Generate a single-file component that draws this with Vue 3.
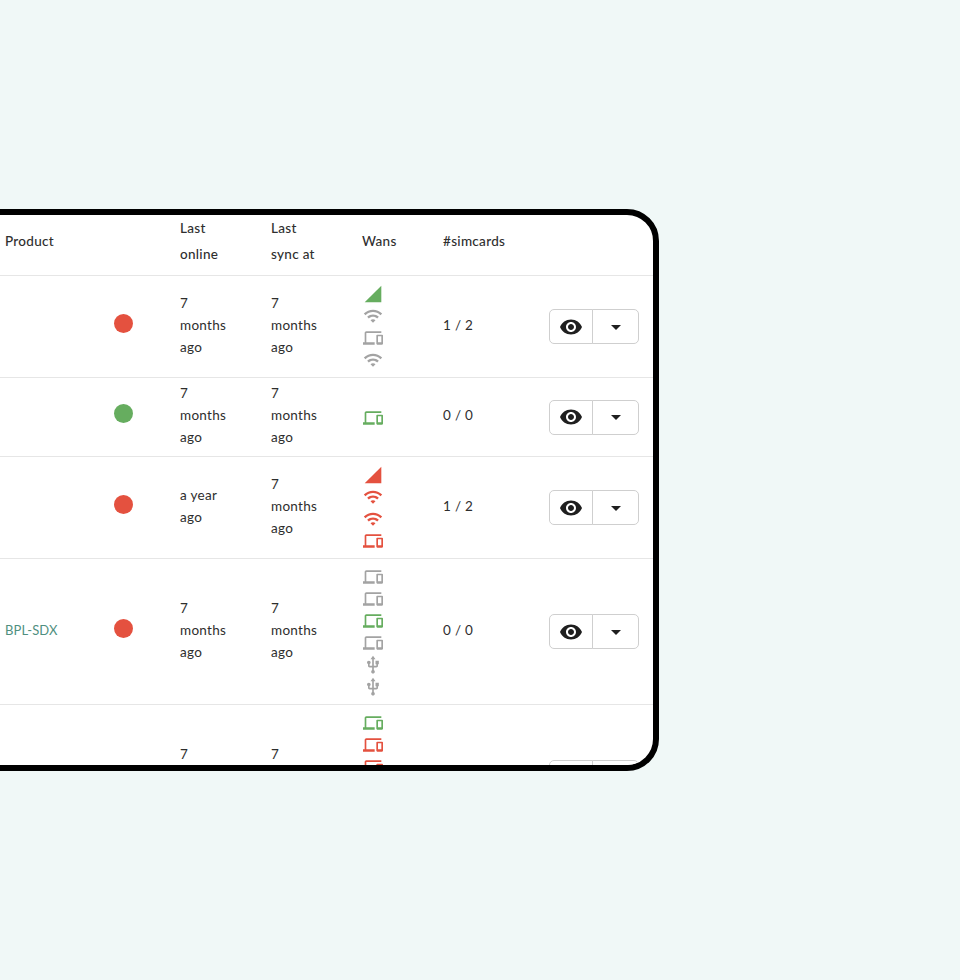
<script setup>
const icons = {
  signal: 'M2 22h20V2z',
  wifi: 'M1 9l2 2c4.97-4.97 13.03-4.97 18 0l2-2C16.93 2.93 7.08 2.93 1 9zm8 8l3 3 3-3c-1.65-1.66-4.34-1.66-6 0zm-4-4l2 2c2.76-2.76 7.24-2.76 10 0l2-2C15.14 9.14 8.87 9.14 5 13z',
  devices: 'M4 6h18V4H4c-1.1 0-2 .9-2 2v11H0v3h14v-3H4V6zm19 2h-6c-.55 0-1 .45-1 1v10c0 .55.45 1 1 1h6c.55 0 1-.45 1-1V9c0-.55-.45-1-1-1zm-1 9h-4v-7h4v7z',
  usb: 'M15 7v4h1v2h-3V5h2l-3-4-3 4h2v8H8v-2.07c.7-.37 1.2-1.08 1.2-1.93 0-1.21-.99-2.2-2.2-2.2-1.21 0-2.2.99-2.2 2.2 0 .85.5 1.56 1.2 1.93V13c0 1.11.89 2 2 2h3v3.05c-.71.37-1.2 1.1-1.2 1.95 0 1.22.99 2.2 2.2 2.2 1.21 0 2.2-.98 2.2-2.2 0-.85-.49-1.58-1.2-1.95V15h3c1.11 0 2-.89 2-2v-2h1V7h-4z'
}

const rows = [
  {
    product: '', status: 'red', online: ['7', 'months', 'ago'], sync: ['7', 'months', 'ago'], sims: '1 / 2',
    wans: [['signal', 'green'], ['wifi', 'gray'], ['devices', 'gray'], ['wifi', 'gray']]
  },
  {
    product: '', status: 'green', online: ['7', 'months', 'ago'], sync: ['7', 'months', 'ago'], sims: '0 / 0',
    wans: [['devices', 'green']]
  },
  {
    product: '', status: 'red', online: ['a year', 'ago'], sync: ['7', 'months', 'ago'], sims: '1 / 2',
    wans: [['signal', 'red'], ['wifi', 'red'], ['wifi', 'red'], ['devices', 'red']]
  },
  {
    product: 'BPL-SDX', status: 'red', online: ['7', 'months', 'ago'], sync: ['7', 'months', 'ago'], sims: '0 / 0',
    wans: [['devices', 'gray'], ['devices', 'gray'], ['devices', 'green'], ['devices', 'gray'], ['usb', 'gray'], ['usb', 'gray']]
  },
  {
    product: '', status: 'red', online: ['7', 'months', 'ago'], sync: ['7', 'months', 'ago'], sims: '0 / 0',
    wans: [['devices', 'green'], ['devices', 'red'], ['devices', 'red'], ['devices', 'gray'], ['usb', 'gray'], ['usb', 'gray']]
  }
]
</script>

<template>
  <div class="page">
    <div class="frame">
      <table class="devices">
        <colgroup>
          <col style="width: 109px" />
          <col style="width: 66px" />
          <col style="width: 91px" />
          <col style="width: 91px" />
          <col style="width: 81px" />
          <col style="width: 106px" />
          <col />
        </colgroup>
        <thead>
          <tr>
            <th>Product</th>
            <th></th>
            <th>Last<br />online</th>
            <th>Last<br />sync at</th>
            <th>Wans</th>
            <th>#simcards</th>
            <th></th>
          </tr>
        </thead>
        <tbody>
          <tr v-for="(row, i) in rows" :key="i">
            <td class="text"><a class="product">{{ row.product }}</a></td>
            <td><span class="dot" :class="row.status"></span></td>
            <td class="text"><div v-for="word in row.online" :key="word">{{ word }}</div></td>
            <td class="text"><div v-for="word in row.sync" :key="word">{{ word }}</div></td>
            <td class="wan-cell">
              <div class="wans">
                <svg v-for="(wan, n) in row.wans" :key="n" class="wan" :class="wan[1]" viewBox="0 0 24 24">
                  <path :d="icons[wan[0]]" />
                </svg>
              </div>
            </td>
            <td class="text">{{ row.sims }}</td>
            <td>
              <div class="actions">
                <button class="btn view">
                  <svg viewBox="0 0 24 24" width="24" height="24">
                    <path d="M12 4.5C7 4.5 2.73 7.61 1 12c1.73 4.39 6 7.5 11 7.5s9.27-3.11 11-7.5c-1.73-4.39-6-7.5-11-7.5zM12 17c-2.76 0-5-2.24-5-5s2.24-5 5-5 5 2.24 5 5-2.24 5-5 5zm0-8c-1.66 0-3 1.34-3 3s1.34 3 3 3 3-1.34 3-3-1.34-3-3-3z" />
                  </svg>
                </button>
                <button class="btn more">
                  <svg viewBox="0 0 24 24" width="24" height="24">
                    <path d="M7 10l5 5 5-5z" />
                  </svg>
                </button>
              </div>
            </td>
          </tr>
        </tbody>
      </table>
    </div>
  </div>
</template>

<style>
html, body {
  margin: 0;
  background: #f0f8f7;
}
</style>

<style scoped>
.page {
  height: 980px;
  overflow: hidden;
  padding-top: 209px;
  box-sizing: border-box;
  font-family: "Lato", "Open Sans", sans-serif;
  font-size: 13.5px;
  letter-spacing: 0.3px;
  color: #2e2e2e;
}

.frame {
  box-sizing: border-box;
  width: 699px;
  height: 562px;
  margin-left: -40px;
  padding-left: 34px;
  background: #fff;
  border: 6px solid #000;
  border-radius: 32px;
  overflow: hidden;
}

.devices {
  width: 653px;
  table-layout: fixed;
  border-collapse: collapse;
}

th {
  height: 60px;
  padding: 0 0 8px 5px;
  box-sizing: border-box;
  text-align: left;
  font-weight: 500;
  line-height: 26px;
  border-bottom: 1px solid #e6e6e6;
}

td {
  padding: 6px 0 6px 5px;
  line-height: 22px;
  border-bottom: 1px solid #e6e6e6;
}

td.text {
  padding-top: 4px;
  padding-bottom: 8px;
}

td.wan-cell {
  padding-top: 7px;
  padding-bottom: 6px;
}

.product {
  font-size: 13px;
  letter-spacing: 0.1px;
  color: #4f8f7f;
}

.dot {
  display: block;
  width: 19px;
  height: 19px;
  margin-bottom: 7px;
  border-radius: 50%;
}
.dot.red { background: #e4513f; }
.dot.green { background: #66ad5f; }

.wans {
  display: flex;
  flex-direction: column;
  padding-left: 1px;
}

.wan {
  display: block;
  width: 20px;
  height: 20px;
  padding: 1px 0;
}
.wan.red { fill: #e4513f; }
.wan.green { fill: #66ad5f; }
.wan.gray { fill: #a3a3a3; }

.actions {
  display: flex;
  width: 90px;
}

.btn {
  display: flex;
  align-items: center;
  justify-content: center;
  height: 35px;
  padding: 0;
  background: #fff;
  border: 1px solid #cfcfcf;
  fill: #1f1f1f;
}

.view {
  width: 44px;
  border-radius: 5px 0 0 5px;
}

.more {
  width: 47px;
  margin-left: -1px;
  border-radius: 0 5px 5px 0;
}
</style>
